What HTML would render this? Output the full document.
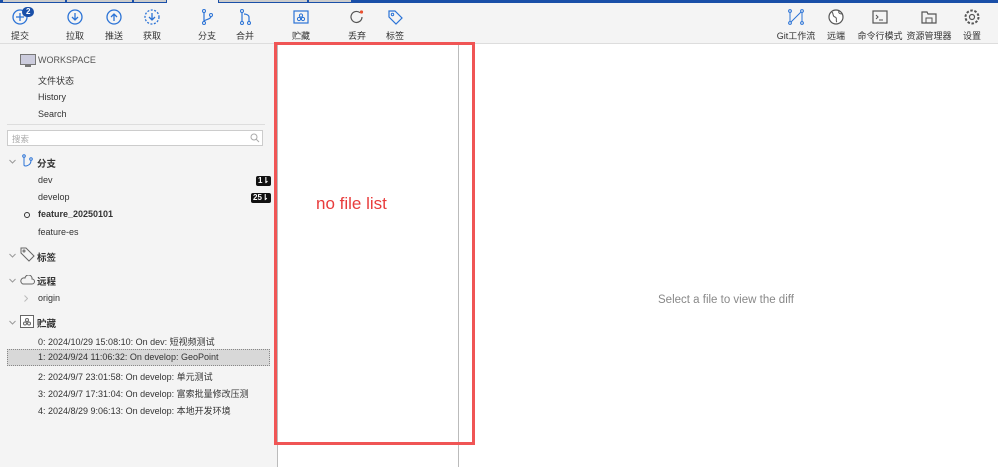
<!DOCTYPE html>
<html><head><meta charset="utf-8"><style>
*{margin:0;padding:0;box-sizing:border-box}
body{width:998px;height:467px;overflow:hidden;background:#f4f4f4;font-family:"Liberation Sans","Noto Sans CJK SC",sans-serif;font-size:9.5px;color:#333;position:relative}
.abs{position:absolute}
.tb{position:absolute;top:8px;width:40px;text-align:center;font-size:9px;color:#333}
.tb svg{display:block;margin:0 auto 3px;width:18px;height:18px}
.side{font-size:9px;color:#333}
.badge{position:absolute;background:#111;color:#fff;font-size:8px;font-weight:bold;border-radius:2px;padding:0 2px;line-height:10px}
.chev{position:absolute;left:9px;width:7px;height:5px}
</style></head><body>
<div class="abs" style="left:0;top:0;width:998px;height:3px;background:#1a4fa8"></div>
<div class="abs" style="left:3px;top:0;width:62px;height:2px;background:#ccc"></div>
<div class="abs" style="left:67px;top:0;width:65px;height:2px;background:#ccc"></div>
<div class="abs" style="left:134px;top:0;width:32px;height:2px;background:#ccc"></div>
<div class="abs" style="left:167px;top:0;width:51px;height:3px;background:#f4f4f4"></div>
<div class="abs" style="left:219px;top:0;width:88px;height:2px;background:#ccc"></div>
<div class="abs" style="left:309px;top:0;width:42px;height:2px;background:#ccc"></div>
<div class="abs" style="left:0;top:43px;width:998px;height:1px;background:#ddd"></div>

<div class="tb" style="left:0"><svg viewBox="0 0 18 18"><circle cx="9" cy="9" r="7" fill="none" stroke="#2b73d6" stroke-width="1.3"/><path d="M9 5v8M5 9h8" stroke="#2b73d6" stroke-width="1.3"/></svg>提交</div>
<div class="badge" style="left:22px;top:7px;border-radius:6px;background:#1a4fa8;padding:0 4px">2</div>
<div class="tb" style="left:55px"><svg viewBox="0 0 18 18"><circle cx="9" cy="9" r="7" fill="none" stroke="#2b73d6" stroke-width="1.3"/><path d="M9 5v7M6 9l3 3 3-3" fill="none" stroke="#2b73d6" stroke-width="1.3"/></svg>拉取</div>
<div class="tb" style="left:94px"><svg viewBox="0 0 18 18"><circle cx="9" cy="9" r="7" fill="none" stroke="#2b73d6" stroke-width="1.3"/><path d="M9 13V6M6 9l3-3 3 3" fill="none" stroke="#2b73d6" stroke-width="1.3"/></svg>推送</div>
<div class="tb" style="left:132px"><svg viewBox="0 0 18 18"><circle cx="9" cy="9" r="7" fill="none" stroke="#2b73d6" stroke-width="1.3" stroke-dasharray="2 1.5"/><path d="M9 5v7M6 9l3 3 3-3" fill="none" stroke="#2b73d6" stroke-width="1.3"/></svg>获取</div>
<div class="tb" style="left:187px"><svg viewBox="0 0 18 18"><circle cx="6" cy="3" r="1.5" fill="none" stroke="#2b73d6"/><circle cx="13" cy="7" r="1.5" fill="none" stroke="#2b73d6"/><circle cx="6" cy="15" r="1.5" fill="none" stroke="#2b73d6"/><path d="M6 4.5v9M13 8.5c0 3-7 3-7 5" fill="none" stroke="#2b73d6" stroke-width="1.2"/></svg>分支</div>
<div class="tb" style="left:225px"><svg viewBox="0 0 18 18"><circle cx="6" cy="3" r="1.5" fill="none" stroke="#2b73d6"/><circle cx="6" cy="15" r="1.5" fill="none" stroke="#2b73d6"/><circle cx="13" cy="15" r="1.5" fill="none" stroke="#2b73d6"/><path d="M6 4.5v9M13 13.5V9c0-2-3-3-5-3" fill="none" stroke="#2b73d6" stroke-width="1.2"/></svg>合并</div>
<div class="tb" style="left:281px"><svg viewBox="0 0 18 18"><rect x="2" y="3" width="14" height="12" fill="none" stroke="#2b73d6" stroke-width="1.2"/><circle cx="7" cy="11" r="1.6" fill="none" stroke="#2b73d6"/><circle cx="11" cy="11" r="1.6" fill="none" stroke="#2b73d6"/><circle cx="9" cy="7.5" r="1.6" fill="none" stroke="#2b73d6"/></svg>贮藏</div>
<div class="tb" style="left:337px"><svg viewBox="0 0 18 18"><path d="M14 9a5.5 5.5 0 1 1-2-4.3" fill="none" stroke="#555" stroke-width="1.2"/><circle cx="13.5" cy="4" r="1.6" fill="#e8502f"/></svg>丢弃</div>
<div class="tb" style="left:375px"><svg viewBox="0 0 18 18"><path d="M3 3h6l7 7-6 6-7-7z" fill="none" stroke="#2b73d6" stroke-width="1.2"/><circle cx="6.5" cy="6.5" r="1.2" fill="none" stroke="#2b73d6"/></svg>标签</div>
<div class="tb" style="left:774px;width:44px"><svg viewBox="0 0 18 18"><circle cx="3" cy="3" r="1.4" fill="none" stroke="#2b73d6"/><circle cx="15" cy="3" r="1.4" fill="none" stroke="#2b73d6"/><circle cx="3" cy="15" r="1.4" fill="none" stroke="#2b73d6"/><circle cx="15" cy="15" r="1.4" fill="none" stroke="#2b73d6"/><path d="M3 4.5v9M15 4.5v9M4 14L14 4" stroke="#2b73d6"/></svg>Git工作流</div>
<div class="tb" style="left:816px"><svg viewBox="0 0 18 18"><circle cx="9" cy="9" r="7" fill="#fff" stroke="#555" stroke-width="1.2"/><path d="M5 4c2 2 0 4 3 5s0 4 2 5M12 3c-1 2 1 3 3 3" fill="none" stroke="#555"/></svg>远端</div>
<div class="tb" style="left:856px;width:48px"><svg viewBox="0 0 18 18"><rect x="2" y="3" width="14" height="12" fill="none" stroke="#555" stroke-width="1.2"/><path d="M5 7l2 2-2 2M8 12h4" fill="none" stroke="#555"/></svg>命令行模式</div>
<div class="tb" style="left:905px;width:48px"><svg viewBox="0 0 18 18"><path d="M2 4h5l1 2h8v9H2z" fill="none" stroke="#555" stroke-width="1.2"/><rect x="6" y="10" width="6" height="5" fill="none" stroke="#555"/></svg>资源管理器</div>
<div class="tb" style="left:952px"><svg viewBox="0 0 18 18"><circle cx="9" cy="9" r="2.5" fill="none" stroke="#555" stroke-width="1.2"/><circle cx="9" cy="9" r="6.5" fill="none" stroke="#555" stroke-width="2" stroke-dasharray="2.5 1.6"/></svg>设置</div>

<div class="side">
<svg class="abs" style="left:20px;top:54px" width="16" height="13" viewBox="0 0 16 13"><rect x="0.5" y="0.5" width="15" height="10" fill="#ccd" stroke="#777"/><rect x="5" y="11" width="6" height="2" fill="#777"/></svg>
<div class="abs" style="left:38px;top:55px;color:#555">WORKSPACE</div>
<div class="abs" style="left:38px;top:74px">文件状态</div>
<div class="abs" style="left:38px;top:92px">History</div>
<div class="abs" style="left:38px;top:109px">Search</div>
<div class="abs" style="left:7px;top:124px;width:258px;height:1px;background:#ddd"></div>
<div class="abs" style="left:7px;top:130px;width:256px;height:16px;background:#fff;border:1px solid #ccc;color:#aaa;font-size:8.5px;padding:2px 4px">搜索</div>
<svg class="abs" style="left:250px;top:133px" width="10" height="10"><circle cx="4" cy="4" r="3" fill="none" stroke="#aaa"/><path d="M6 6l3 3" stroke="#aaa"/></svg>
<svg class="chev" style="top:159px" viewBox="0 0 7 5"><path d="M.5 1l3 3 3-3" fill="none" stroke="#999"/></svg>
<svg class="abs" style="left:21px;top:154px" width="13" height="14" viewBox="0 0 13 14"><circle cx="3" cy="2" r="1.3" fill="none" stroke="#2b73d6"/><circle cx="10" cy="5" r="1.3" fill="none" stroke="#2b73d6"/><path d="M3 3.5v7.5c0 2 7 1 7-4.5" fill="none" stroke="#2b73d6"/></svg>
<div class="abs" style="left:37px;top:156px;font-weight:bold;font-size:9.5px">分支</div>
<div class="abs" style="left:38px;top:175px">dev</div>
<div class="badge" style="left:256px;top:176px">1⇂</div>
<div class="abs" style="left:38px;top:192px">develop</div>
<div class="badge" style="left:251px;top:193px">25⇂</div>
<div class="abs" style="left:24px;top:212px;width:6px;height:6px;border:1.5px solid #333;border-radius:50%"></div>
<div class="abs" style="left:38px;top:209px;font-weight:bold">feature_20250101</div>
<div class="abs" style="left:38px;top:227px">feature-es</div>
<svg class="chev" style="top:253px" viewBox="0 0 7 5"><path d="M.5 1l3 3 3-3" fill="none" stroke="#999"/></svg>
<svg class="abs" style="left:20px;top:247px" width="15" height="15" viewBox="0 0 15 15"><path d="M1 1h5l8 8-5 5-8-8z" fill="none" stroke="#666"/><circle cx="4" cy="4" r="1" fill="none" stroke="#666"/></svg>
<div class="abs" style="left:37px;top:250px;font-weight:bold;font-size:9.5px">标签</div>
<svg class="chev" style="top:278px" viewBox="0 0 7 5"><path d="M.5 1l3 3 3-3" fill="none" stroke="#999"/></svg>
<svg class="abs" style="left:20px;top:275px" width="15" height="10" viewBox="0 0 15 10"><path d="M3 9h9a2.5 2.5 0 0 0 0-5 3.5 3.5 0 0 0-7-1A3 3 0 0 0 3 9z" fill="none" stroke="#666"/></svg>
<div class="abs" style="left:37px;top:274px;font-weight:bold;font-size:9.5px">远程</div>
<svg class="abs" style="left:24px;top:295px" width="4" height="7" viewBox="0 0 4 7"><path d="M.5.5l3 3-3 3" fill="none" stroke="#bbb"/></svg>
<div class="abs" style="left:38px;top:293px">origin</div>
<svg class="chev" style="top:320px" viewBox="0 0 7 5"><path d="M.5 1l3 3 3-3" fill="none" stroke="#999"/></svg>
<svg class="abs" style="left:20px;top:315px" width="14" height="13" viewBox="0 0 14 13"><rect x="0.5" y="0.5" width="13" height="12" fill="#fff" stroke="#666"/><circle cx="5" cy="8.5" r="1.5" fill="none" stroke="#666"/><circle cx="9" cy="8.5" r="1.5" fill="none" stroke="#666"/><circle cx="7" cy="5" r="1.5" fill="none" stroke="#666"/></svg>
<div class="abs" style="left:37px;top:316px;font-weight:bold;font-size:9.5px">贮藏</div>
<div class="abs" style="left:38px;top:335px">0: 2024/10/29 15:08:10: On dev: 短视频测试</div>
<div class="abs" style="left:7px;top:349px;width:263px;height:17px;background:#d8d8d8;border:1px dotted #888"></div>
<div class="abs" style="left:38px;top:352px">1: 2024/9/24 11:06:32: On develop: GeoPoint</div>
<div class="abs" style="left:38px;top:370px">2: 2024/9/7 23:01:58: On develop: 单元测试</div>
<div class="abs" style="left:38px;top:387px">3: 2024/9/7 17:31:04: On develop: 富索批量修改压测</div>
<div class="abs" style="left:38px;top:404px">4: 2024/8/29 9:06:13: On develop: 本地开发环境</div>
</div>

<div class="abs" style="left:277px;top:44px;width:182px;height:423px;background:#fff;border-left:1px solid #bbb;border-right:1px solid #bbb"></div>
<div class="abs" style="left:459px;top:44px;width:539px;height:423px;background:#fff"></div>
<div class="abs" style="left:274px;top:42px;width:201px;height:403px;border:3px solid #f05555"></div>
<div class="abs" style="left:316px;top:194px;font-size:17px;color:#e83c3c">no file list</div>
<div class="abs" style="left:658px;top:294px;font-size:11.5px;color:#888">Select a file to view the diff</div>
</body></html>
